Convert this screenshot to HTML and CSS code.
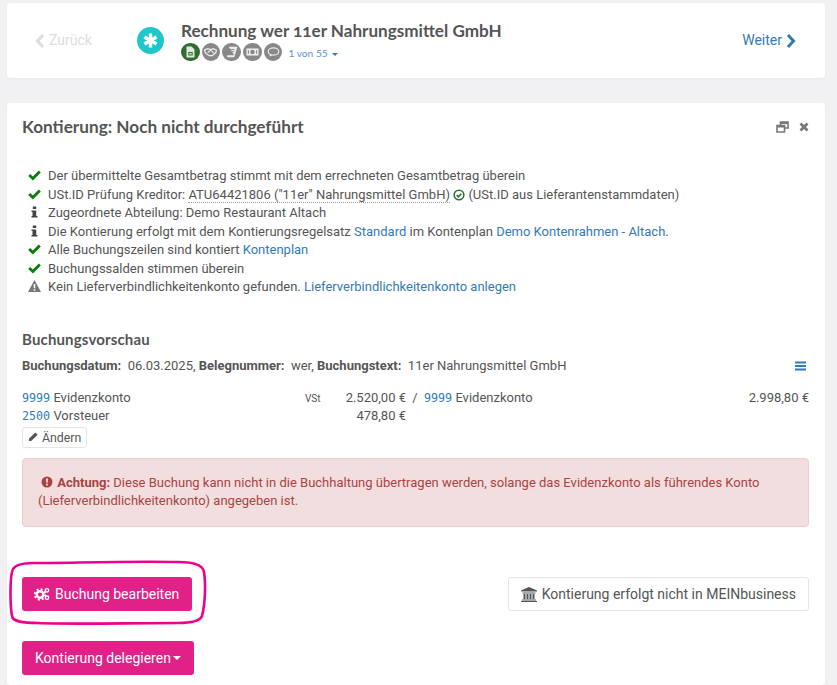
FILE: index.html
```html
<!DOCTYPE html>
<html lang="de">
<head>
    <meta charset="UTF-8">
    <meta name="viewport" content="width=device-width, initial-scale=1.0">
    <title>Rechnung</title>
    <link rel="stylesheet" href="styles.css">
</head>
<body>
    <div class="card nav-card">
        <div class="nav-back">
            <svg class="chev" viewBox="0 0 10 14"><path d="M8 1 2.500 7 8 13" fill="none" stroke="currentColor" stroke-width="3"/></svg>
            Zurück
        </div>
        <div class="logo">
            <svg viewBox="0 0 16 16" width="15" height="15"><g stroke="#fff" stroke-width="3.600"><path d="M8 .5v15"/><path d="M1.500 4.250l13 7.500"/><path d="M14.500 4.250 1.500 11.750"/></g></svg>
        </div>
        <div class="nav-title">
            <h1>Rechnung wer 11er Nahrungsmittel GmbH</h1>
            <div class="steps">
                <span class="step done">
                    <svg viewBox="0 0 12 12"><path d="M2 .5h5l3 3V11.500H2z" fill="#dfe9df"/><path d="M3.800 6h4.400v3.500H3.800z" fill="#2f6f32"/><path d="M4.800 7h2.400v1.400H4.800z" fill="#dfe9df"/></svg>
                </span>
                <span class="step">
                    <svg viewBox="0 0 14 12"><path d="M.5 4 4 2.500l3 1 3-1 3.500 1.500-1 3-3.500 3H5.500l-4-3z" fill="none" stroke="#eee" stroke-width="1.400"/><path d="M4 6.500 7 4l4 3.500" fill="none" stroke="#eee" stroke-width="1.200"/></svg>
                </span>
                <span class="step">
                    <svg viewBox="0 0 12 12"><path d="M3.500 1H11.500L9 9.500H2.500c-1 0-1 1.500 0 1.500H8.500l.5-1.500" fill="#eee" stroke="#eee" stroke-width=".6"/><path d="M5 3.500h4M4.500 5.500h4" stroke="#888" stroke-width=".9"/></svg>
                </span>
                <span class="step">
                    <svg viewBox="0 0 14 12"><rect x=".5" y="2.200" width="13" height="7.600" fill="#eee"/><circle cx="7" cy="6" r="2.500" fill="#888"/><path d="M2 4h1.200v4H2zM10.800 4H12v4h-1.200z" fill="#888"/></svg>
                </span>
                <span class="step">
                    <svg viewBox="0 0 14 12"><ellipse cx="7" cy="5.500" rx="5.700" ry="3.900" fill="none" stroke="#eee" stroke-width="1.200"/><path d="M3.500 8 2.500 11l3.500-1.800z" fill="#eee"/></svg>
                </span>
                <a class="count">1 von 55 <span class="caret blue"></span></a>
            </div>
        </div>
        <a class="nav-next">
            Weiter
            <svg class="chev" viewBox="0 0 10 14"><path d="M2 1l5.500 6L2 13" fill="none" stroke="currentColor" stroke-width="3"/></svg>
        </a>
    </div>

    <div class="card main-card">
        <div class="main-head">
            <h2>Kontierung: Noch nicht durchgeführt</h2>
            <div class="head-tools">
                <svg viewBox="0 0 13 12" width="13" height="12"><path d="M4.500 4V1h7.500v6H8.500M1 4.500h7.500V11H1z" fill="none" stroke="#777" stroke-width="1.600"/><path d="M4.500 1h7.500v2H4.500zM1 4.500h7.500v2H1z" fill="#777"/></svg>
                <svg viewBox="0 0 10 10" width="10" height="10"><path d="M1.500 1.500l7 7M8.500 1.500l-7 7" stroke="#777" stroke-width="2.800"/></svg>
            </div>
        </div>

        <ul class="checks">
            <li><svg class="ic" viewBox="0 0 13 10"><path d="M1.200 5l3.700 3.500 6.900-7" fill="none" stroke="#0a7d0a" stroke-width="2.800"/></svg>Der übermittelte Gesamtbetrag stimmt mit dem errechneten Gesamtbetrag überein</li>
            <li><svg class="ic" viewBox="0 0 13 10"><path d="M1.200 5l3.700 3.500 6.900-7" fill="none" stroke="#0a7d0a" stroke-width="2.800"/></svg>USt.ID Prüfung Kreditor: <span class="dotted">ATU64421806 ("11er" Nahrungsmittel GmbH)</span>
                <svg class="ok" viewBox="0 0 12 12"><circle cx="6" cy="6" r="4.800" fill="none" stroke="#2f6f32" stroke-width="1.600"/><path d="M3.600 6l1.800 1.800 3-3" fill="none" stroke="#2f6f32" stroke-width="1.600"/></svg>
                (USt.ID aus Lieferantenstammdaten)</li>
            <li><svg class="ic" viewBox="0 0 13 12"><path d="M4.800 0.500h3.400v2.500H4.800zM3.500 4.500h4.700v5.500h1.300v1.500h-6V10h1V6h-1z" fill="#444"/></svg>Zugeordnete Abteilung: Demo Restaurant Altach</li>
            <li><svg class="ic" viewBox="0 0 13 12"><path d="M4.800 0.500h3.400v2.500H4.800zM3.500 4.500h4.700v5.500h1.300v1.500h-6V10h1V6h-1z" fill="#444"/></svg>Die Kontierung erfolgt mit dem Kontierungsregelsatz <a>Standard</a> im Kontenplan <a>Demo Kontenrahmen - Altach</a>.</li>
            <li><svg class="ic" viewBox="0 0 13 10"><path d="M1.200 5l3.700 3.500 6.900-7" fill="none" stroke="#0a7d0a" stroke-width="2.800"/></svg>Alle Buchungszeilen sind kontiert <a>Kontenplan</a></li>
            <li><svg class="ic" viewBox="0 0 13 10"><path d="M1.200 5l3.700 3.500 6.900-7" fill="none" stroke="#0a7d0a" stroke-width="2.800"/></svg>Buchungssalden stimmen überein</li>
            <li><svg class="ic" viewBox="0 0 13 12"><path d="M6.500 0 13 12H0z" fill="#777"/><path d="M5.700 4h1.600v4.300H5.700zM5.700 9.200h1.600v1.500H5.700z" fill="#fff"/></svg>Kein Lieferverbindlichkeitenkonto gefunden. <a>Lieferverbindlichkeitenkonto anlegen</a></li>
        </ul>

        <h3>Buchungsvorschau</h3>
        <div class="meta">
            <p><b>Buchungsdatum:</b>&nbsp; 06.03.2025, <b>Belegnummer:</b>&nbsp; wer, <b>Buchungstext:</b>&nbsp; 11er Nahrungsmittel GmbH</p>
            <svg viewBox="0 0 11 10" width="11" height="10"><path d="M0 1.500h11M0 5h11M0 8.500h11" stroke="#337ab7" stroke-width="1.800"/></svg>
        </div>

        <div class="entries">
            <div class="entry-side"><a class="acct">9999</a> Evidenzkonto</div>
            <div class="vst">VSt</div>
            <div class="amount">2.520,00 €</div>
            <div class="slash">/</div>
            <div class="entry-side"><a class="acct">9999</a> Evidenzkonto</div>
            <div class="amount-right">2.998,80 €</div>
            <div class="entry-side"><a class="acct">2500</a> Vorsteuer</div>
            <div></div>
            <div class="amount">478,80 €</div>
        </div>

        <button class="btn-small">
            <svg viewBox="0 0 12 12" width="11" height="11"><path d="M1 8.500 8 1.500l2.500 2.500-7 7H1z" fill="#555"/></svg>
            Ändern
        </button>

        <div class="alert">
            <svg viewBox="0 0 12 12" width="12" height="12"><circle cx="6" cy="6" r="5.500" fill="#a94442"/><path d="M5 2.500h2l-.2 4.300H5.200zM5.100 7.800h1.800v1.700H5.100z" fill="#f2dede"/></svg>
            <b>Achtung:</b> Diese Buchung kann nicht in die Buchhaltung übertragen werden, solange das Evidenzkonto als führendes Konto (Lieferverbindlichkeitenkonto) angegeben ist.
        </div>

        <div class="actions">
            <div class="marked">
                <button class="btn-pink">
                    <svg viewBox="0 0 16 14" width="16" height="14"><circle cx="6" cy="7.500" r="3.300" fill="none" stroke="#fff" stroke-width="2.500"/><circle cx="6" cy="7.500" r="5.300" fill="none" stroke="#fff" stroke-width="1.800" stroke-dasharray="2 2.160"/><circle cx="13" cy="3.300" r="1.700" fill="none" stroke="#fff" stroke-width="1.400"/><circle cx="13" cy="10.700" r="1.700" fill="none" stroke="#fff" stroke-width="1.400"/></svg>
                    Buchung bearbeiten
                </button>
                <svg class="ring" viewBox="0 0 200 66" width="200" height="66"><path d="M25 3C15 3 5 5 4 12 2 20 2 45 4 56c1 6 11 7 26 7 30 1.500 90 0 140 0 15 0 22-2 24-7 3-11 4-31 2-44-1-7-11-10-26-10C120 1 60 3 25 3z" fill="none" stroke="#ec008c" stroke-width="2.600"/></svg>
            </div>
            <button class="btn-outline">
                <svg viewBox="0 0 16 15" width="16" height="15"><path d="M8 0 16 3.500v1H0v-1zM1.500 5.500h13v1h-13zM2.500 7h2v5h-2zM5.500 7h2v5h-2zM8.500 7h2v5h-2zM11.500 7h2v5h-2zM1 12.500h14v1H1zM0 14h16v1H0z" fill="#555"/></svg>
                Kontierung erfolgt nicht in MEINbusiness
            </button>
        </div>

        <button class="btn-pink delegate">Kontierung delegieren<span class="caret"></span></button>
    </div>
</body>
</html>
```

FILE: styles.css
```css
* {
    box-sizing: border-box;
}
html, body {
    height: 685px;
    overflow: hidden;
}
body {
    margin: 0;
    padding: 3px 12px 0 7px;
    background-color: #f1f1f4;
    font-family: Roboto, "Liberation Sans", sans-serif;
    font-size: 13px;
    line-height: 18.5px;
    color: #555;
}
a {
    color: #337ab7;
}
.card {
    background: #fff;
    border-radius: 4px;
    box-shadow: 0 1px 3px rgba(0, 0, 0, 0.04);
}
.nav-card {
    height: 75px;
    display: flex;
    align-items: center;
    padding: 0 29px 0 28px;
}
.nav-back {
    width: 102px;
    font-size: 14px;
    color: #ddd;
    display: flex;
    align-items: center;
    gap: 4px;
}
.chev {
    width: 10px;
    height: 14px;
}
.logo {
    width: 27px;
    height: 27px;
    border-radius: 50%;
    background: #20c7ca;
    display: flex;
    align-items: center;
    justify-content: center;
    margin-right: 17px;
}
.nav-title {
    flex: 1;
    padding-top: 1px;
}
h1 {
    margin: 0;
    font-family: Lato, "Open Sans", sans-serif;
    font-size: 17.100px;
    line-height: 22px;
    font-weight: 700;
    font-variant-numeric: oldstyle-nums;
    color: #555;
}
.steps {
    display: flex;
    align-items: center;
    gap: 2.200px;
}
.step {
    width: 18.500px;
    height: 18.500px;
    border-radius: 50%;
    background: #888;
    display: flex;
    align-items: center;
    justify-content: center;
}
.step svg {
    width: 13px;
    height: 12px;
}
.step.done {
    background: #2f6f32;
}
.count {
    margin: 2px 0 0 4px;
    font-size: 10.200px;
    font-family: Lato, sans-serif;
    color: #5a95c8;
}
.caret {
    display: inline-block;
    margin-left: 2px;
    vertical-align: middle;
    border-top: 4px solid #fff;
    border-left: 4px solid transparent;
    border-right: 4px solid transparent;
}
.caret.blue {
    border-top: 3px solid #337ab7;
    border-left: 3px solid transparent;
    border-right: 3px solid transparent;
}
.nav-next {
    font-size: 14px;
    display: flex;
    align-items: center;
    gap: 4px;
}
.main-card {
    margin-top: 25px;
    height: 582px;
    padding: 0 16px 0 15px;
}
.main-head {
    display: flex;
    justify-content: space-between;
    align-items: center;
    height: 48px;
}
h2 {
    margin: 0;
    font-family: Lato, "Open Sans", sans-serif;
    font-size: 17.200px;
    font-weight: 700;
    color: #555;
}
.head-tools {
    display: flex;
    align-items: center;
    gap: 10px;
}
.checks {
    list-style: none;
    margin: 16px 0 0;
    padding: 0;
}
.checks li {
    display: block;
    height: 18.500px;
}
.ic {
    width: 13px;
    height: 12px;
    margin: 0 7px 0 6px;
    vertical-align: -1px;
}
.ok {
    width: 12px;
    height: 12px;
    vertical-align: -2px;
}
.dotted {
    border-bottom: 1px dotted #999;
}
h3 {
    margin: 32px 0 0;
    font-family: Lato, "Open Sans", sans-serif;
    font-size: 15px;
    line-height: 20px;
    font-weight: 700;
    letter-spacing: 0.15px;
    color: #555;
}
.meta {
    display: flex;
    justify-content: space-between;
    align-items: center;
    margin-top: 8px;
}
.meta p {
    margin: 0;
}
.meta svg {
    margin-right: 3px;
}
.entries {
    display: grid;
    grid-template-columns: 283px 30px 71px 18px 1fr auto;
    grid-auto-rows: 18px;
    margin-top: 14px;
}
.acct {
    font-family: "DejaVu Sans Mono", monospace;
    font-size: 11.700px;
}
.vst {
    font-size: 10px;
    padding-top: 1px;
}
.amount {
    text-align: right;
}
.slash {
    text-align: center;
}
.btn-small {
    display: block;
    height: 21px;
    margin-top: 2px;
    padding: 0 5px;
    background: #fff;
    border: 1px solid #e5e5e5;
    border-radius: 3px;
    font: 12.300px Roboto, sans-serif;
    color: #555;
}
.alert {
    margin-top: 10px;
    height: 69px;
    padding: 14.500px 15px;
    background: #f2dede;
    border: 1px solid #ebccd1;
    border-radius: 4px;
    color: #a94442;
}
.alert svg {
    margin: 0 1px 0 3px;
    vertical-align: -1px;
}
.actions {
    display: flex;
    justify-content: space-between;
    align-items: center;
    margin-top: 50px;
}
.marked {
    position: relative;
}
.ring {
    position: absolute;
    left: -14px;
    top: -17px;
    pointer-events: none;
}
.btn-pink {
    height: 34px;
    padding: 0 13px 0 12px;
    background: #e02288;
    border: none;
    border-radius: 3px;
    font: 14px Roboto, sans-serif;
    color: #fff;
    display: flex;
    align-items: center;
    gap: 5px;
}
.btn-outline {
    height: 34px;
    padding: 0 12px;
    background: #fff;
    border: 1px solid #e5e5e5;
    border-radius: 3px;
    font: 14px Roboto, sans-serif;
    color: #555;
    display: flex;
    align-items: center;
    gap: 5px;
}
.delegate {
    margin-top: 30px;
    padding-left: 13px;
    gap: 0;
}
```
